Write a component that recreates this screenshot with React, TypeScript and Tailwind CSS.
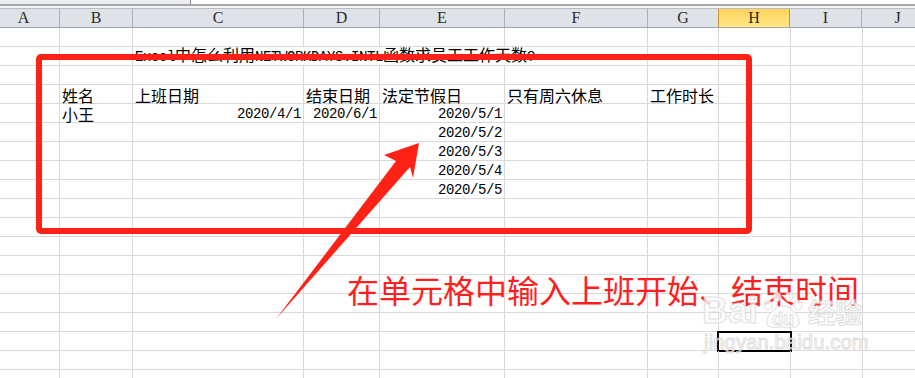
import React from 'react';

interface Col {
  key: string;
  w: number;
}

interface Cell {
  text: string;
  right?: boolean;
}

const COLS: Col[] = [
  { key: 'A', w: 60 },
  { key: 'B', w: 73 },
  { key: 'C', w: 171 },
  { key: 'D', w: 76 },
  { key: 'E', w: 125 },
  { key: 'F', w: 143 },
  { key: 'G', w: 71 },
  { key: 'H', w: 72 },
  { key: 'I', w: 72 },
  { key: 'J', w: 72 },
];

const ROW_COUNT = 19;
const ACTIVE = { row: 16, col: 'H' };

const DATA: Record<number, Record<string, Cell>> = {
  1: { C: { text: 'Excel中怎么利用NETWORKDAYS.INTL函数求员工工作天数?' } },
  3: {
    B: { text: '姓名' },
    C: { text: '上班日期' },
    D: { text: '结束日期' },
    E: { text: '法定节假日' },
    F: { text: '只有周六休息' },
    G: { text: '工作时长' },
  },
  4: {
    B: { text: '小王' },
    C: { text: '2020/4/1', right: true },
    D: { text: '2020/6/1', right: true },
    E: { text: '2020/5/1', right: true },
  },
  5: { E: { text: '2020/5/2', right: true } },
  6: { E: { text: '2020/5/3', right: true } },
  7: { E: { text: '2020/5/4', right: true } },
  8: { E: { text: '2020/5/5', right: true } },
};

// text overflowing from C hides the grid lines it runs over
const HIDDEN_BORDERS: Record<number, string[]> = {
  1: ['C', 'D', 'E'],
};

const CJK = /([\u3000-\u303f\u4e00-\u9fff\uff00-\uffef]+)/;

function Mixed({ text }: { text: string }) {
  return (
    <>
      {text
        .split(CJK)
        .filter(Boolean)
        .map((part, i) =>
          CJK.test(part) ? (
            <span key={i} className="font-['Noto_Sans_CJK_SC',sans-serif] text-[16px]">
              {part}
            </span>
          ) : (
            <span key={i} className="font-['Liberation_Mono',monospace] text-[14px] tracking-[-0.4px]">
              {part}
            </span>
          )
        )}
    </>
  );
}

function HeaderRow() {
  return (
    <div className="flex h-[20px] border-y border-t-[#b9bdc3] border-b-[#9ea4ab] bg-[#dfe3e8]">
      {COLS.map((c, i) => {
        const active = c.key === ACTIVE.col;
        return (
          <div
            key={c.key}
            style={{ width: c.w }}
            className={
              'shrink-0 h-full flex items-center justify-center border-r font-["Liberation_Serif",serif] text-[16px] leading-none text-[#2b2b2b] ' +
              (active
                ? 'bg-gradient-to-b from-[#ffd35a] to-[#ffe784] border-[#c8923a] border-l -ml-px'
                : 'border-[#aab0b8]') +
              (i === 0 ? ' pr-3' : '')
            }
          >
            {c.key}
          </div>
        );
      })}
    </div>
  );
}

function GridRow({ index }: { index: number }) {
  const cells = DATA[index] || {};
  const hidden = HIDDEN_BORDERS[index] || [];
  return (
    <div className="flex h-[19px] border-b border-[#d9d9d9]">
      {COLS.map((c) => {
        const cell = cells[c.key];
        const isActive = index === ACTIVE.row && c.key === ACTIVE.col;
        return (
          <div
            key={c.key}
            style={{ width: c.w }}
            className={
              'relative shrink-0 h-full flex items-end text-[16px] leading-[16px] font-["Noto_Sans_CJK_SC",sans-serif] text-black ' +
              (hidden.includes(c.key) ? '' : 'border-r border-[#d9d9d9] ') +
              (cell?.right ? 'justify-end pr-[2px]' : 'pl-[2px]')
            }
          >
            {cell && (
              <div className="whitespace-nowrap leading-[16px]">
                <Mixed text={cell.text} />
              </div>
            )}
            {isActive && (
              <div className="absolute -left-[2px] -top-[1px] w-[75px] h-[21px] border-2 border-black" />
            )}
          </div>
        );
      })}
    </div>
  );
}

function Arrow() {
  return (
    <svg
      className="absolute left-0 top-0 pointer-events-none"
      width={915}
      height={378}
      viewBox="0 0 915 378"
    >
      <polygon
        points="276,319 396,161 384,155 419,143 413,178 410,167"
        fill="#fe2216"
      />
    </svg>
  );
}

function Watermark() {
  const stroke = 'text-[#fcfcfc] [-webkit-text-stroke:1px_#d8d8d8]';
  return (
    <div className="absolute left-[702px] top-[292px] pointer-events-none opacity-80">
      <div className="flex items-center h-[38px]">
        <span className={"font-['Liberation_Sans',sans-serif] font-bold text-[36px] leading-none " + stroke}>
          Bai
        </span>
        <svg width="48" height="38" viewBox="0 0 48 38" className="mx-[1px]">
          <g fill="#fcfcfc" stroke="#d8d8d8" strokeWidth="1">
            <ellipse cx="9" cy="13" rx="4" ry="5" />
            <ellipse cx="18" cy="5" rx="4" ry="4.5" />
            <ellipse cx="30" cy="5" rx="4" ry="4.5" />
            <ellipse cx="39" cy="13" rx="4" ry="5" />
            <path d="M24 14 C14 14 6 26 8 32 C10 37 18 35 24 35 C30 35 38 37 40 32 C42 26 34 14 24 14 Z" />
          </g>
          <text
            x="24"
            y="33"
            textAnchor="middle"
            fontFamily="Liberation Sans, sans-serif"
            fontWeight="bold"
            fontSize="18"
            fill="#fcfcfc"
            stroke="#d8d8d8"
            strokeWidth="0.8"
          >
            du
          </text>
        </svg>
        <span className={"font-['Noto_Sans_CJK_SC',sans-serif] font-bold text-[27px] leading-none " + stroke}>
          经验
        </span>
      </div>
      <div className={"mt-[2px] ml-[2px] font-['Liberation_Sans',sans-serif] text-[20px] leading-none tracking-[0.2px] " + stroke}>
        jingyan.baidu.com
      </div>
    </div>
  );
}

export default function App() {
  return (
    <div className="relative w-[915px] h-[378px] overflow-hidden bg-white">
      <div className="flex h-[4px]">
        <div className="w-[191px] bg-[#eceef1] border-r border-[#8a8a8a]" />
        <div className="flex-1 bg-white" />
      </div>
      <div className="h-[2px] bg-[#a7a9ad]" />
      <div className="h-[2px] bg-[#f3f4f6]" />
      <HeaderRow />
      {Array.from({ length: ROW_COUNT }, (_, i) => (
        <GridRow key={i} index={i} />
      ))}

      <div className="absolute left-[36px] top-[54px] w-[716px] h-[180px] border-[6px] border-[#fe2216] rounded-[5px] pointer-events-none" />
      <Arrow />
      <div className="absolute left-[347px] top-[273px] font-['Noto_Sans_CJK_SC',sans-serif] text-[32px] leading-none text-[#ff1f1f] whitespace-nowrap">
        在单元格中输入上班开始、结束时间
      </div>
      <Watermark />
    </div>
  );
}
